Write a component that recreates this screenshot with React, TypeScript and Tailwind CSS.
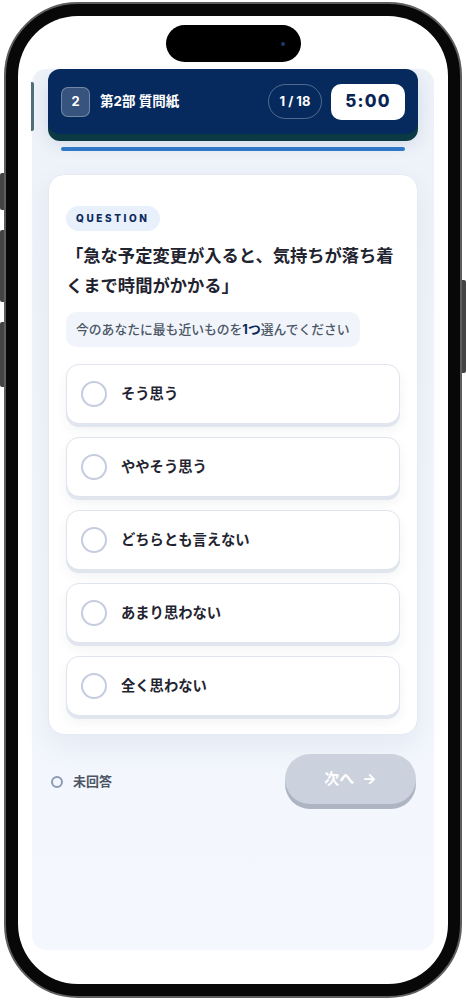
import React from "react";

const options = ["そう思う", "ややそう思う", "どちらとも言えない", "あまり思わない", "全く思わない"];

function OptionItem({ label }: { label: string }) {
  return (
    <div className="flex h-[60px] items-center gap-[14px] rounded-[13px] border border-[#dfe4ee] bg-white pl-[14px] shadow-[0_3px_0_#e1e5ee,0_6px_12px_rgba(30,50,90,0.06)]">
      <span className="h-[26px] w-[26px] shrink-0 rounded-full border-2 border-[#c6cce0] bg-white" />
      <span className="text-[14.3px] font-bold text-[#1f2430]">{label}</span>
    </div>
  );
}

export default function App() {
  return (
    <div className="relative h-[1000px] w-[466px] overflow-hidden bg-white font-['Inter','Noto_Sans_CJK_JP',sans-serif]">
      {/* side buttons */}
      <div className="absolute left-0 top-[173px] h-[37px] w-[4px] rounded-l-[2px] bg-[#444]" />
      <div className="absolute left-0 top-[230px] h-[72px] w-[4px] rounded-l-[2px] bg-[#444]" />
      <div className="absolute left-0 top-[322px] h-[65px] w-[4px] rounded-l-[2px] bg-[#444]" />
      <div className="absolute right-0 top-[280px] h-[93px] w-[4px] rounded-r-[2px] bg-[#444]" />

      {/* phone body */}
      <div className="relative ml-[4px] mt-[2px] h-[996px] w-[458px] rounded-[74px] border-2 border-[#5e5e5e] bg-[#080808] p-[12px]">
        <div className="flex h-full w-full flex-col overflow-hidden rounded-[60px] bg-white">
          {/* dynamic island */}
          <div className="mx-auto mt-[9px] flex h-[37px] w-[135px] shrink-0 items-center justify-end rounded-full bg-black pr-[16px]">
            <span className="h-[4px] w-[4px] rounded-full bg-[#1b3a6b]" />
          </div>

          {/* app area */}
          <div className="relative mx-[14px] mt-[7px] flex h-[881px] flex-col rounded-[14px] bg-gradient-to-b from-[#edf2f9] via-[#f2f6fc] to-[#f4f7fd]">
            <div className="absolute left-[-1px] top-[13px] h-[49px] w-[3px] rounded-r-[2px] bg-[#4f6f7a]" />

            {/* header */}
            <div className="mx-4 flex h-[65px] shrink-0 items-center rounded-[12px] bg-[#062a5e] px-[13px] shadow-[0_7px_0_#0b3a44,0_10px_18px_rgba(10,40,90,0.12)]">
              <div className="flex h-[30px] w-[29px] items-center justify-center rounded-[7px] border border-white/30 bg-white/20 text-[13px] font-bold text-white">
                2
              </div>
              <div className="ml-[10px] text-[13.5px] font-bold text-white">第2部 質問紙</div>
              <div className="ml-auto flex h-[35px] w-[54px] items-center justify-center rounded-full border border-white/30 text-[13px] font-bold text-white">
                1 / 18
              </div>
              <div className="ml-[9px] flex h-[36px] w-[74px] items-center justify-center rounded-[10px] bg-white text-[17px] font-extrabold tracking-[1.2px] text-[#0a2555]">
                5:00
              </div>
            </div>

            {/* progress */}
            <div className="mx-[29px] mt-[13px] h-[4px] shrink-0 rounded-full bg-[#2f78c8]" />

            {/* card */}
            <div className="mx-4 mt-[23px] rounded-[16px] border border-[#e4e9f2] bg-white px-[17px] pb-[18px] pt-[29px] shadow-[0_12px_30px_rgba(30,60,120,0.07)]">
              <div className="inline-flex h-[25px] items-center rounded-full bg-[#e8f0fb] px-[10px] text-[10px] font-extrabold tracking-[2.6px] text-[#0b2a5b]">
                QUESTION
              </div>
              <p className="mt-[10px] text-[17.3px] font-bold leading-[30px] text-[#1f2430]">
                「急な予定変更が入ると、気持ちが落ち着くまで時間がかかる」
              </p>
              <div className="mt-[11px] inline-flex h-[35px] items-center rounded-[10px] bg-[#f1f5fb] px-[10px] text-[12.8px] font-medium text-[#4b5565]">
                今のあなたに最も近いものを<span className="font-bold text-[#0b2a5b]">1つ</span>選んでください
              </div>
              <div className="mt-[17px] flex flex-col gap-[13px]">
                {options.map((o) => (
                  <OptionItem key={o} label={o} />
                ))}
              </div>
            </div>

            {/* footer row */}
            <div className="mt-[19px] flex items-center justify-between pl-[19px] pr-[18px]">
              <div className="flex items-center gap-[10px]">
                <span className="h-[12px] w-[12px] rounded-full border-2 border-[#8d9ab5]" />
                <span className="text-[13px] font-bold text-[#4b5565]">未回答</span>
              </div>
              <div className="mb-[6px] flex h-[50px] w-[131px] items-center justify-center rounded-full bg-[#cbd2dd] text-[15px] font-bold text-white shadow-[0_5px_0_#adb5c3]">
                次へ <span className="ml-[8px]">→</span>
              </div>
            </div>
          </div>
        </div>
      </div>
    </div>
  );
}
